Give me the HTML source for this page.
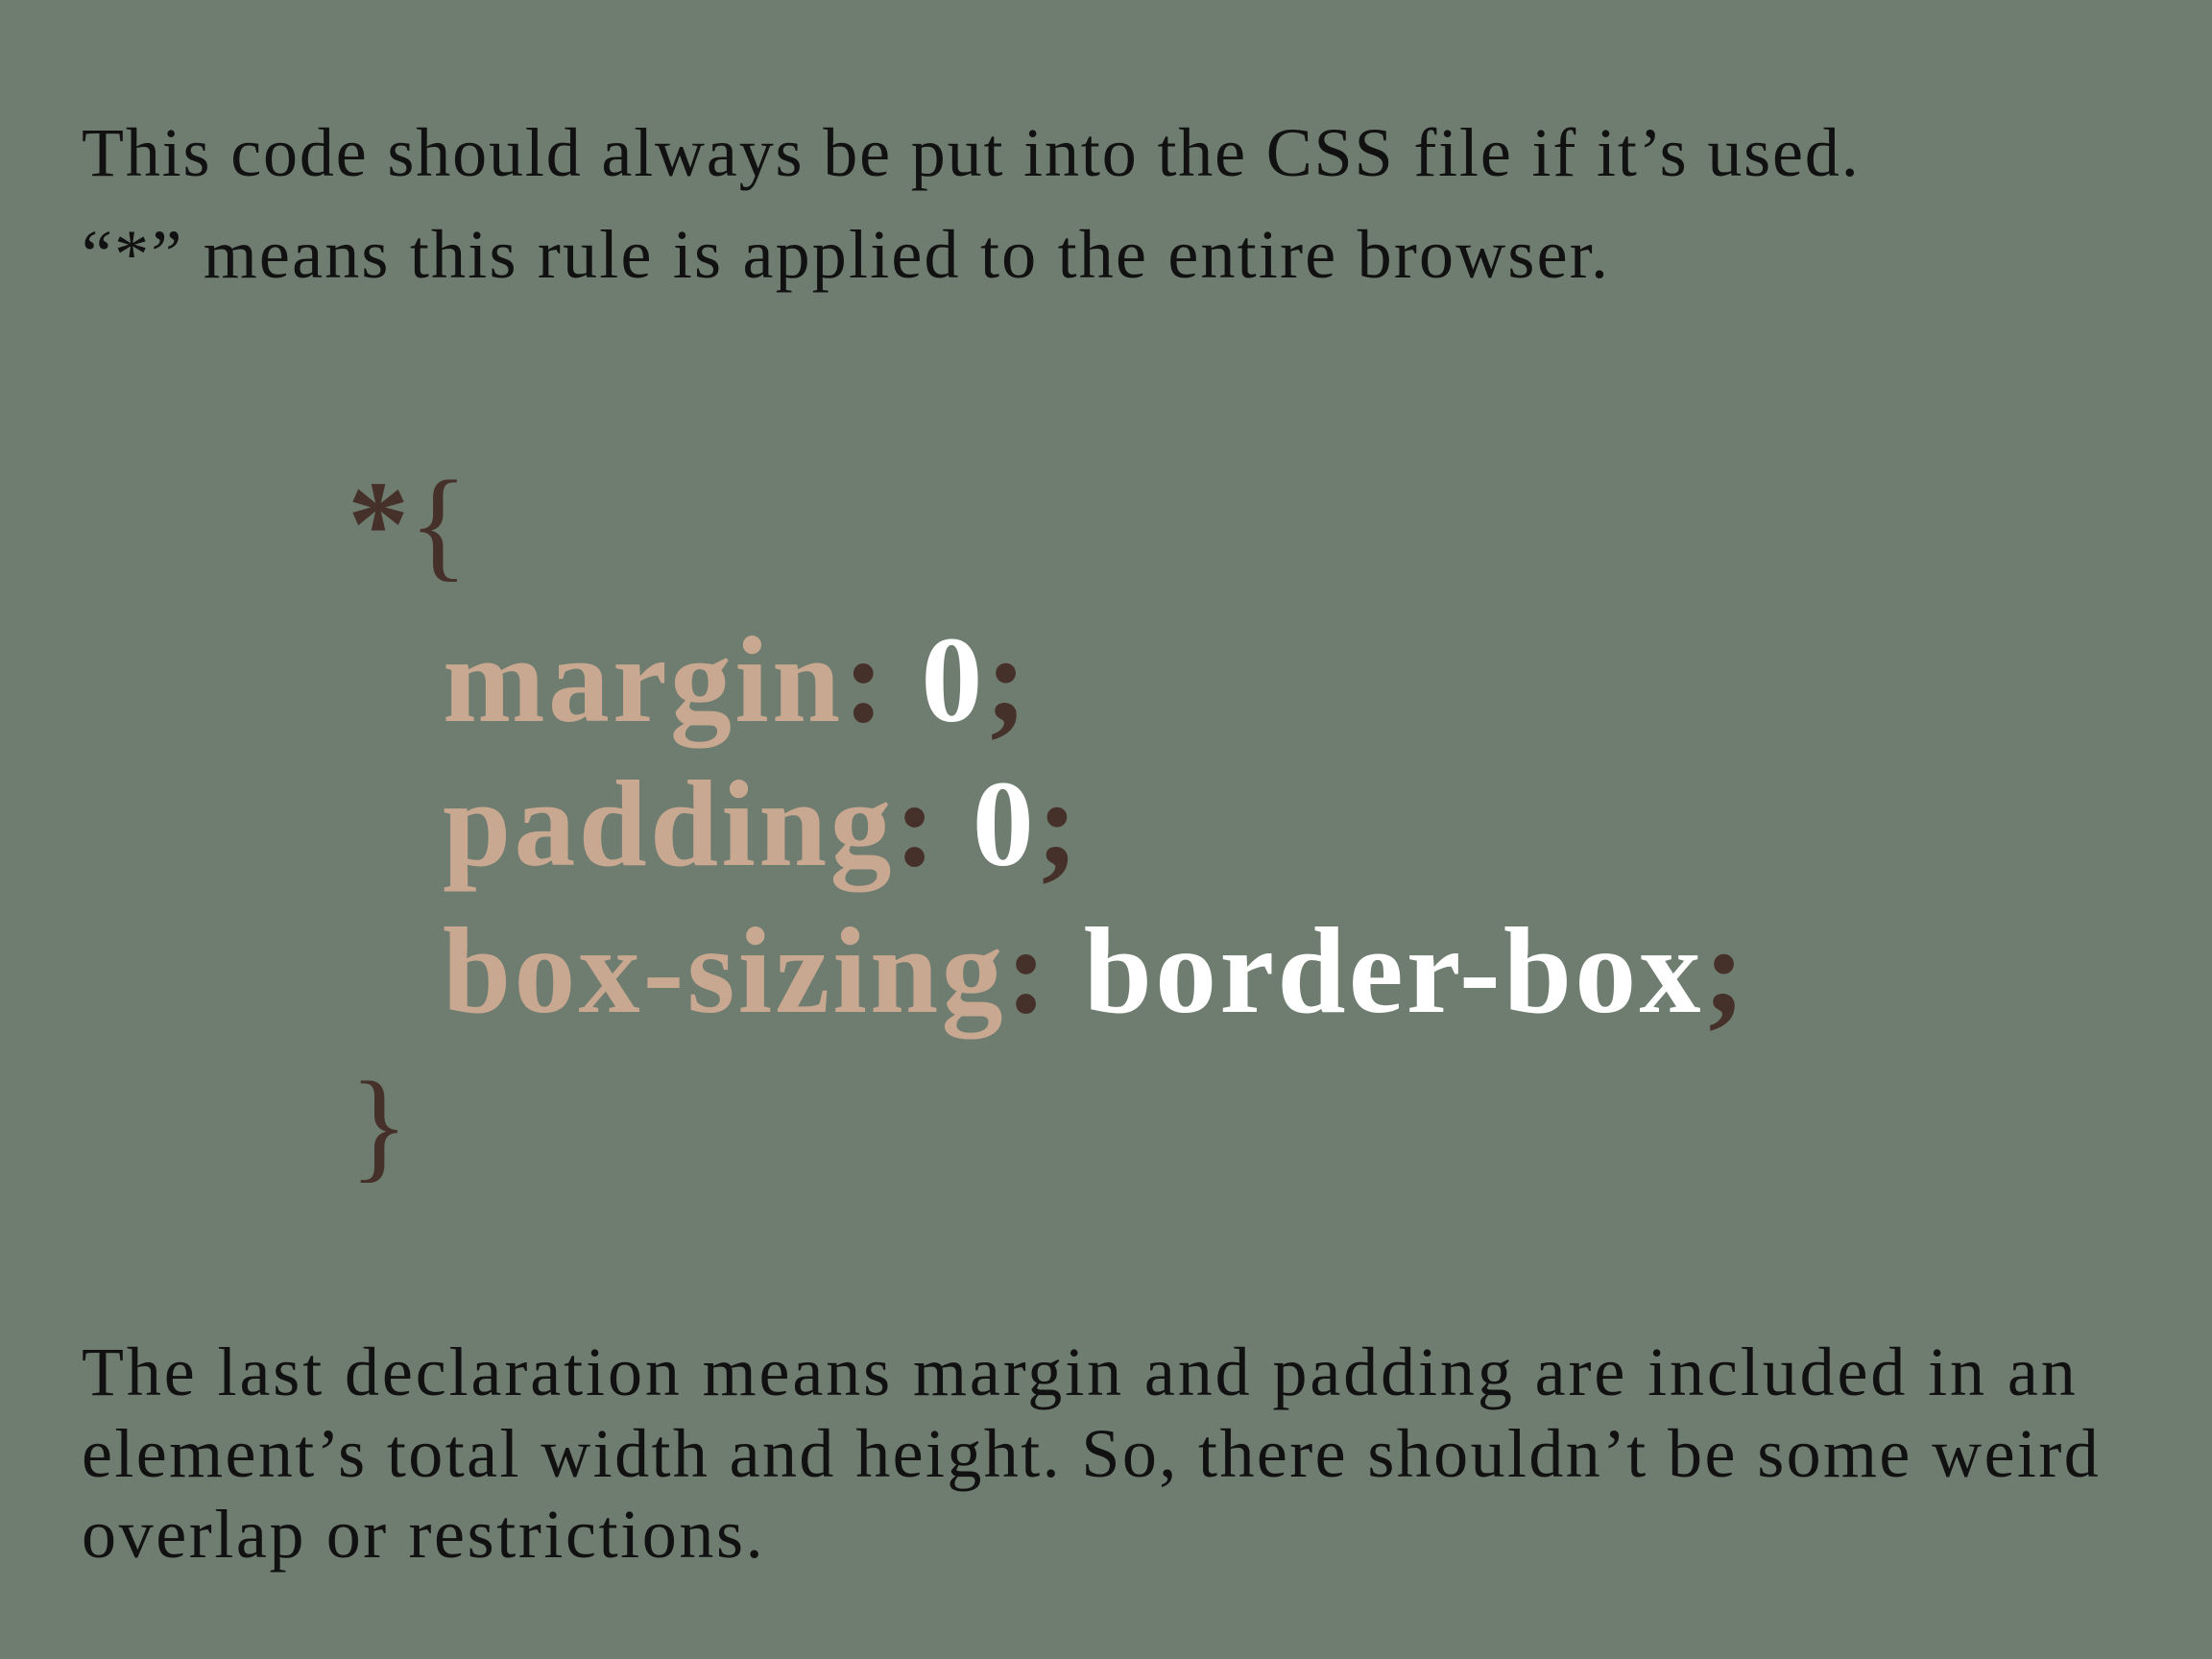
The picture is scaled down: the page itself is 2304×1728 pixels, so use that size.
<!DOCTYPE html>
<html><head><meta charset="utf-8"><style>
html,body{margin:0;padding:0}
body{width:2304px;height:1728px;background:#6f7c70;position:relative;overflow:hidden;font-family:"Liberation Serif",serif;color:#111}
.t{position:absolute;left:85px;font-size:72px;white-space:nowrap;line-height:1}
.c{position:absolute;font-size:128px;font-weight:bold;white-space:nowrap;line-height:1;color:#c8a890;letter-spacing:3.2px}
.b{color:#45312a}.w{color:#fff}
</style></head><body>
<div class="t" style="top:123px;letter-spacing:1.85px">This code should always be put into the CSS file if it’s used.</div>
<div class="t" style="top:229px;letter-spacing:2.2px">“*” means this rule is applied to the entire browser.</div>
<div class="c b" style="left:362px;top:482px;font-weight:normal;letter-spacing:0"><b>*</b>{</div>
<div class="c" style="left:461px;top:644px">margin<span class="b">:</span> <span class="w">0</span><span class="b">;</span></div>
<div class="c" style="left:461px;top:794px">padding<span class="b">:</span> <span class="w">0</span><span class="b">;</span></div>
<div class="c" style="left:461px;top:947px">box-sizing<span class="b">:</span> <span class="w">border-box</span><span class="b">;</span></div>
<div class="c b" style="left:364px;top:1108px;font-weight:normal">}</div>
<div class="t" style="top:1393px;letter-spacing:2.9px">The last declaration means margin and padding are included in an</div>
<div class="t" style="top:1478px;letter-spacing:2.4px">element’s total width and height. So, there shouldn’t be some weird</div>
<div class="t" style="top:1562px;letter-spacing:2.6px">overlap or restrictions.</div>
</body></html>
